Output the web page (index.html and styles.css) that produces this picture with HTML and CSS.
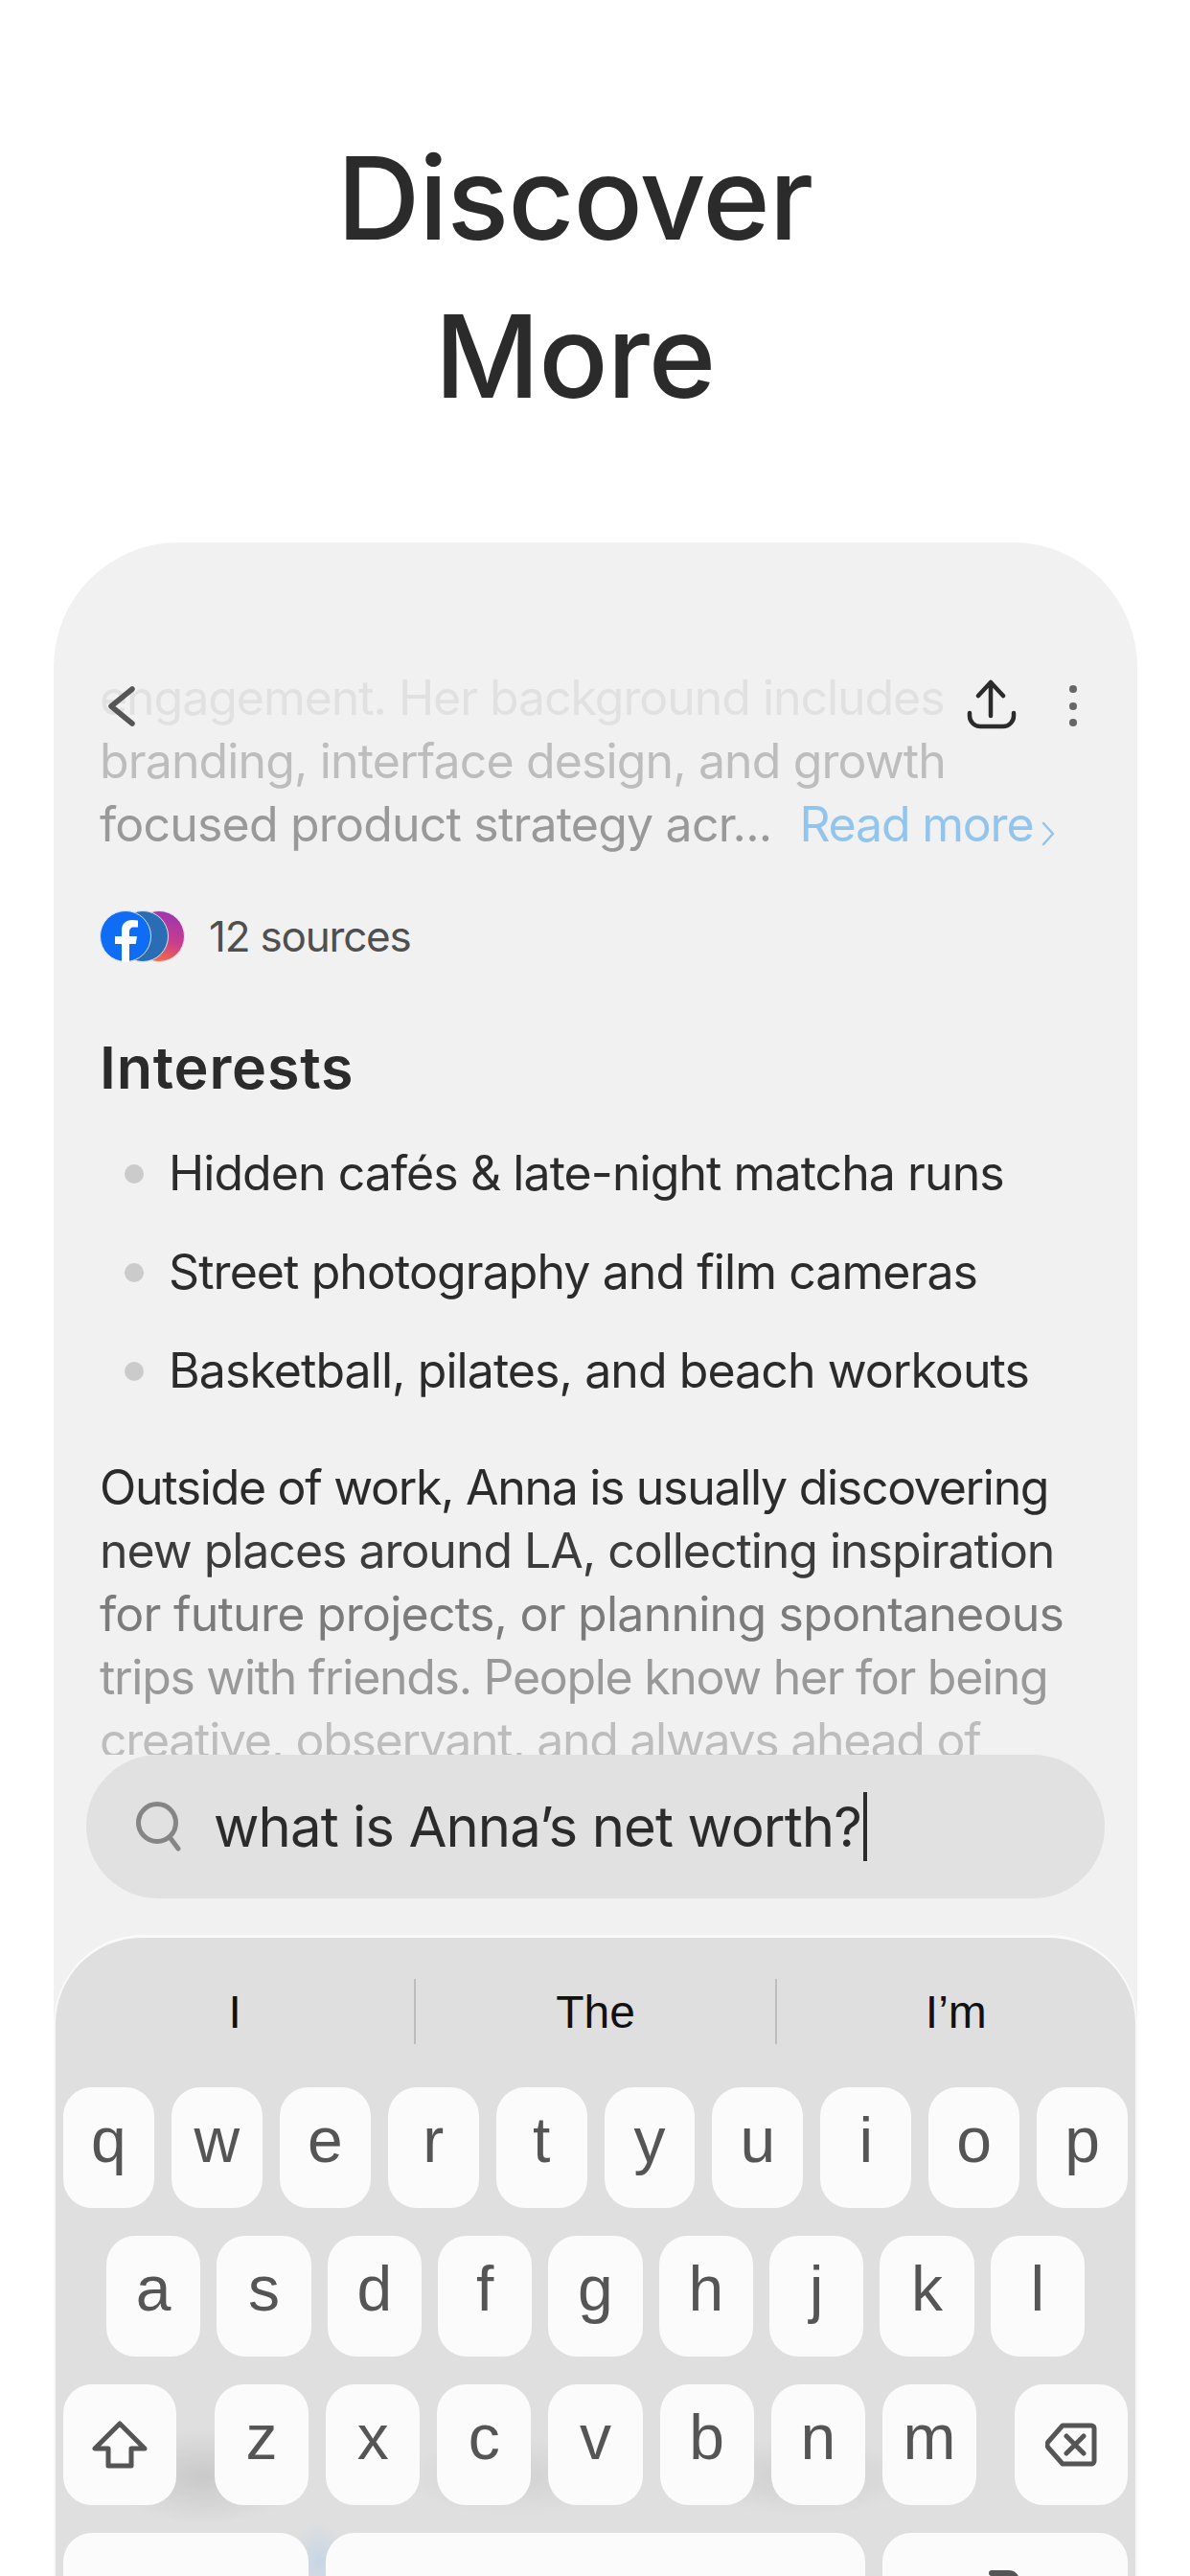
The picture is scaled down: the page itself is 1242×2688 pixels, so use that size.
FILE: index.html
```html
<!DOCTYPE html>
<html lang="en">
<head>
<meta charset="utf-8">
<title>Discover More</title>
<link rel="stylesheet" href="styles.css">
</head>
<body>
<main class="page">
  <h1 class="headline">Discover<br>More</h1>
  <section class="phone">
    <nav class="toolbar">
      <svg class="icon-back" viewBox="0 0 30 42" width="30" height="42"><path d="M27 3 5 21l22 18"/></svg>
      <svg class="icon-share" viewBox="0 0 54 54" width="54" height="54"><path d="M26 39V4M13 18 26 4l13 14M4 36v3a11 11 0 0 0 11 11h24a11 11 0 0 0 11-11v-3"/></svg>
      <div class="more-dots"><i></i><i></i><i></i></div>
    </nav>
    <article class="article">
      <p class="lines">
        <span class="line tone-1 fit-first">engagement. Her background includes</span>
        <span class="line tone-2 fit-mid">branding, interface design, and growth</span>
        <span class="line tone-3 fit-focus">focused product strategy acr...<a class="read-more">Read more<svg viewBox="0 0 16 26" width="16" height="26"><path d="M3 2l10 11L3 24"/></svg></a></span>
      </p>
      <div class="sources">
        <div class="source-stack">
          <svg class="src src-ig" viewBox="0 0 54 54"><defs><linearGradient id="ig" x1="0.7" y1="0" x2="0.4" y2="1"><stop offset="0" stop-color="#9b35b0"/><stop offset="0.55" stop-color="#c93d8c"/><stop offset="1" stop-color="#f6703f"/></linearGradient></defs><circle cx="27" cy="27" r="26.5" fill="url(#ig)" stroke="#eadcf0"/></svg>
          <svg class="src src-li" viewBox="0 0 54 54"><circle cx="27" cy="27" r="26.5" fill="#2a6db5" stroke="#d8e4f2"/><path d="M18 17h3v21h-3" fill="none" stroke="#fff" stroke-width="2.5"/></svg>
          <svg class="src src-fb" viewBox="0 0 54 54"><circle cx="27" cy="27" r="26.5" fill="#0f6cf5" stroke="#d3e3fb"/><path d="M23 54V35h-7v-8h7v-6c0-7 4-11 11-11l6 .5v7h-4c-3.500 0-5 2-5 5V27h8l-1.300 8H31v19z" fill="#fff"/></svg>
        </div>
        <span class="sources-label">12 sources</span>
      </div>
      <h2 class="section-title">Interests</h2>
      <ul class="interests">
        <li>Hidden cafés &amp; late-night matcha runs</li>
        <li>Street photography and film cameras</li>
        <li>Basketball, pilates, and beach workouts</li>
      </ul>
      <p class="lines summary">
        <span class="line tone-6 fit-tight">Outside of work, Anna is usually discovering</span>
        <span class="line tone-5 fit-second">new places around LA, collecting inspiration</span>
        <span class="line tone-4 fit-loose">for future projects, or planning spontaneous</span>
        <span class="line tone-3 fit-tight">trips with friends. People know her for being</span>
        <span class="line tone-2 fit-tight">creative, observant, and always ahead of</span>
      </p>
    </article>
    <div class="search">
      <svg class="icon-search" viewBox="0 0 48 52" width="48" height="52"><circle cx="22" cy="22" r="19.500"/><path d="M35 37l9 12"/></svg>
      <span class="search-text">what is Anna’s net worth?</span><span class="caret"></span>
    </div>
    <section class="keyboard">
      <div class="suggestions">
        <span>I</span><span>The</span><span>I’m</span>
      </div>
      <div class="key-row">
        <b class="key">q</b><b class="key">w</b><b class="key">e</b><b class="key">r</b><b class="key">t</b><b class="key">y</b><b class="key">u</b><b class="key">i</b><b class="key">o</b><b class="key">p</b>
      </div>
      <div class="key-row row-home">
        <b class="key">a</b><b class="key">s</b><b class="key">d</b><b class="key">f</b><b class="key">g</b><b class="key">h</b><b class="key">j</b><b class="key">k</b><b class="key">l</b>
      </div>
      <div class="key-row row-letters">
        <b class="key key-mod"><svg viewBox="0 0 58 50" width="58" height="50"><path d="M29 3 3 29h14v18h24V29h14z"/></svg></b>
        <div class="key-group"><b class="key">z</b><b class="key">x</b><b class="key">c</b><b class="key">v</b><b class="key">b</b><b class="key">n</b><b class="key">m</b></div>
        <b class="key key-mod"><svg viewBox="0 0 54 46" width="54" height="46"><path d="M18 3h30a3 3 0 0 1 3 3v34a3 3 0 0 1-3 3H18L3 26a5 5 0 0 1 0-6z"/><path d="M22 14l18 18M40 14 22 32"/></svg></b>
      </div>
      <div class="key-row row-bottom">
        <b class="key key-fn"></b>
        <b class="key key-space"></b>
        <b class="key key-return"><svg viewBox="0 0 40 20" width="40" height="20"><path d="M6 4h18a8 8 0 0 1 8 8v8"/></svg></b>
      </div>
    </section>
  </section>
</main>
</body>
</html>
```
FILE: styles.css
```css
* { box-sizing: border-box; }

html, body { margin: 0; background: #fff; }

.page {
  width: 1242px;
  height: 2688px;
  overflow: hidden;
  display: flex;
  flex-direction: column;
  font-family: Inter, "Noto Sans", sans-serif;
}

.headline {
  margin: 0;
  height: 566px;
  padding: 124px 42px 0 0;
  text-align: center;
  font-size: 120px;
  line-height: 165px;
  font-weight: 500;
  letter-spacing: -1px;
  color: #2b2b2b;
}

/* Device panel */
.phone {
  position: relative;
  flex: 1;
  min-height: 0;
  margin: 0 55px 0 56px;
  border-radius: 130px 130px 0 0;
  background: #f1f1f1;
  overflow: hidden;
  display: flex;
  flex-direction: column;
}

.toolbar {
  position: absolute;
  top: 0;
  left: 0;
  right: 0;
  height: 230px;
  pointer-events: none;
}
.toolbar svg, .search svg, .key svg, .read-more svg { fill: none; stroke-linecap: round; stroke-linejoin: round; }
.icon-back { position: absolute; left: 55px; top: 150px; stroke: #555; stroke-width: 5.5; }
.icon-share { position: absolute; left: 952px; top: 142px; stroke: #2b2b2b; stroke-width: 4.5; }
.more-dots {
  position: absolute;
  left: 1060px;
  top: 149px;
  display: flex;
  flex-direction: column;
  gap: 9.5px;
}
.more-dots i { width: 8px; height: 8px; border-radius: 50%; background: #666; }

/* Article text */
.article {
  height: 1265px;
  flex: none;
  overflow: hidden;
  padding: 129px 40px 0 48px;
}
.lines { margin: 0; }
.line {
  display: block;
  font-size: 50px;
  font-weight: 420;
  line-height: 66px;
  white-space: nowrap;
}
.fit-tight { letter-spacing: -1.3px; }
.fit-first { letter-spacing: -1.05px; }
.fit-second { letter-spacing: -1.03px; }
.fit-mid { letter-spacing: -0.87px; }
.fit-loose { letter-spacing: -0.75px; }
.fit-focus { letter-spacing: -0.8px; }
.tone-1 { color: #e1e1e1; }
.tone-2 { color: #bdbdbd; }
.tone-3 { color: #999; }
.tone-4 { color: #7b7b7b; }
.tone-5 { color: #3c3c3c; }
.tone-6 { color: #2b2b2b; }

.read-more { margin-left: 29px; color: #92c5ee; letter-spacing: -1.2px; }
.read-more svg { margin-left: 8px; stroke: #92c5ee; stroke-width: 2.5; vertical-align: -5px; }

.sources {
  display: flex;
  align-items: center;
  margin-top: 57px;
  height: 54px;
}
.source-stack { position: relative; width: 89px; height: 54px; }
.src { position: absolute; top: 0; width: 54px; height: 54px; }
.src-fb { left: 0; }
.src-li { left: 18px; }
.src-ig { left: 35px; }
.sources-label { margin-left: 25px; font-size: 44px; letter-spacing: -1.2px; color: #4f4f4f; }

.section-title {
  margin: 75px 0 0;
  font-size: 61px;
  line-height: 70px;
  font-weight: 600;
  letter-spacing: 0.8px;
  color: #2b2b2b;
}

.interests {
  list-style: none;
  margin: 24px 0 0;
  padding: 0 0 0 72px;
}
.interests li {
  position: relative;
  font-size: 50px;
  font-weight: 420;
  line-height: 103px;
  letter-spacing: -0.93px;
  white-space: nowrap;
  color: #2b2b2b;
}
.interests li::before {
  content: "";
  position: absolute;
  left: -46px;
  top: 42px;
  width: 20px;
  height: 20px;
  border-radius: 50%;
  background: #cbcbcb;
}
.summary { margin-top: 37px; }

/* Query field */
.search {
  flex: none;
  margin: 0 34px;
  height: 150px;
  border-radius: 75px;
  background: #e1e1e1;
  display: flex;
  align-items: center;
  padding-left: 52px;
}
.icon-search { stroke: #858585; stroke-width: 5; }
.search-text {
  margin-left: 33px;
  font-size: 58px;
  font-weight: 420;
  letter-spacing: -0.9px;
  color: #2b2b2b;
}
.caret { width: 4px; height: 72px; margin-left: 2px; background: #2b2b2b; }

/* On-screen keyboard */
.keyboard {
  flex: none;
  margin: 41px 2px 0;
  height: 700px;
  padding: 0 8px;
  border-radius: 90px 90px 0 0;
  box-shadow: 0 -3px 0 #fafafa, -2px 0 0 #f8f8f8, 2px 0 0 #f8f8f8;
  background:
    radial-gradient(ellipse 100px 50px at 155px 562px, #c9c9c9, transparent),
    radial-gradient(ellipse 120px 40px at 480px 562px, #d2d2d2, transparent),
    radial-gradient(ellipse 120px 40px at 780px 562px, #cecece, transparent),
    radial-gradient(ellipse 30px 40px at 275px 650px, #c6d6e6, transparent),
    #dfdfdf;
}
.suggestions {
  display: flex;
  height: 156px;
  margin: 0 -8px;
  padding-top: 43px;
  align-items: flex-start;
}
.suggestions span {
  flex: 1;
  height: 68px;
  font-family: "Liberation Sans", sans-serif;
  font-size: 48px;
  line-height: 70px;
  text-align: center;
  color: #111;
}
.suggestions span + span { border-left: 2px solid #bdbdbd; }

.key-row {
  display: flex;
  gap: 18px;
  height: 126px;
  margin-bottom: 29px;
}
.key {
  flex: 1;
  display: flex;
  align-items: center;
  justify-content: center;
  padding-bottom: 16px;
  border-radius: 30px;
  background: #fbfbfb;
  font-family: "Liberation Sans", sans-serif;
  font-size: 66px;
  font-weight: 400;
  color: #555;
}
.row-home { gap: 17px; padding: 0 45px; }
.row-letters { gap: 40px; }
.key-mod { flex: 0 0 118px; padding-bottom: 0; }
.key-mod svg { stroke: #555; stroke-width: 5; }
.key-group { flex: 1; display: flex; gap: 18px; }
.row-bottom { gap: 18px; }
.key-fn { flex: 0 0 256px; }
.key-space { flex: 1; }
.key-return { flex: 0 0 256px; align-items: flex-start; padding: 38px 0 0; }
.key-return svg { stroke: #555; stroke-width: 6; }
```
